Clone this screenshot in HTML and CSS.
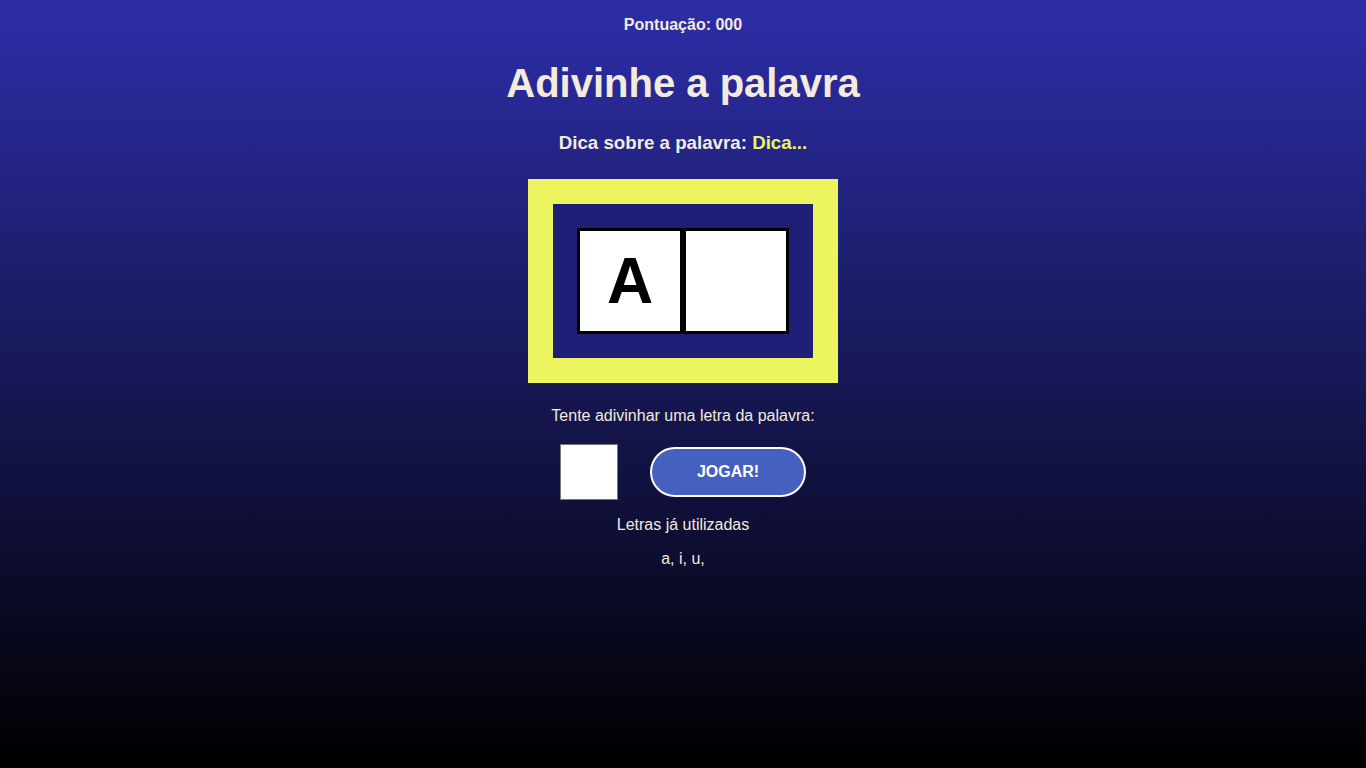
FILE: index.html
```html
<!DOCTYPE html>
<html lang="pt">
<head>
<meta charset="utf-8">
<title>Adivinhe a palavra</title>
<link rel="stylesheet" href="styles.css">
</head>
<body>
<main class="game">
  <p class="score">Pontuação: 000</p>
  <h1 class="title">Adivinhe a palavra</h1>
  <h3 class="hint">Dica sobre a palavra: <span class="hint-text">Dica...</span></h3>
  <div class="board">
    <div class="word">
      <div class="letter">A</div>
      <div class="letter"></div>
    </div>
  </div>
  <p class="prompt">Tente adivinhar uma letra da palavra:</p>
  <div class="controls">
    <input class="guess" type="text" maxlength="1">
    <button class="play">JOGAR!</button>
  </div>
  <p class="used-title">Letras já utilizadas</p>
  <p class="used">a, i, u,</p>
</main>
</body>
</html>
```

FILE: styles.css
```css
html, body {
  margin: 0;
  padding: 0;
  height: 100%;
}

body {
  background: linear-gradient(to bottom, #2d2ea8 0%, #000 100%);
  background-attachment: fixed;
  font-family: "Liberation Sans", Arial, sans-serif;
  color: #f3ebdc;
}

.game {
  display: flex;
  flex-direction: column;
  align-items: center;
  padding-top: 16px;
}

.score {
  margin: 0;
  font-size: 16px;
  font-weight: bold;
}

.title {
  margin: 26px 0 0;
  font-size: 40px;
  font-weight: bold;
  line-height: 46px;
}

.hint {
  margin: 26px 0 0;
  font-size: 18.72px;
  font-weight: bold;
}

.hint-text {
  color: #ecf45f;
}

.board {
  margin-top: 25px;
  border: 25px solid #ecf45f;
  background: #1f1f78;
  padding: 24px;
}

.word {
  display: flex;
}

.letter {
  width: 100px;
  height: 100px;
  border: 3px solid #000;
  background: #fff;
  color: #000;
  font-size: 64px;
  font-weight: bold;
  display: flex;
  align-items: center;
  justify-content: center;
}

.prompt {
  margin: 24px 0 0;
  font-size: 16px;
}

.controls {
  display: flex;
  align-items: center;
  gap: 32px;
  margin-top: 19px;
}

.guess {
  box-sizing: border-box;
  width: 58px;
  height: 56px;
  border: 1px solid #767676;
  background: #fff;
  padding: 0;
  font-size: 24px;
  text-align: center;
}

.play {
  box-sizing: border-box;
  width: 156px;
  height: 50px;
  border: 2px solid #fff;
  border-radius: 25px;
  background: #4560be;
  color: #fff;
  font-family: "Liberation Sans", Arial, sans-serif;
  font-size: 16px;
  font-weight: bold;
}

.used-title {
  margin: 16px 0 0;
  font-size: 16px;
}

.used {
  margin: 16px 0 0;
  font-size: 16px;
}
```
